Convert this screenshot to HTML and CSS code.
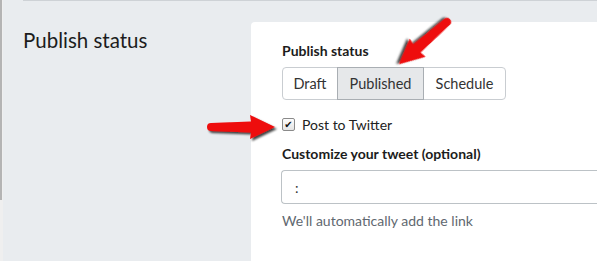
FILE: index.html
```html
<!DOCTYPE html>
<html lang="en">
<head>
    <meta charset="UTF-8">
    <meta name="viewport" content="width=device-width, initial-scale=1.0">
    <title>Publish status</title>
    <link rel="stylesheet" href="styles.css">
</head>
<body>
    <div class="page">
        <div class="topline"></div>
        <div class="section">
            <div class="side">
                <h2>Publish status</h2>
            </div>
            <div class="card">
                <div class="field-label">Publish status</div>
                <div class="btn-group">
                    <button type="button" class="draft">Draft</button>
                    <button type="button" class="published active">Published</button>
                    <button type="button" class="schedule">Schedule</button>
                </div>
                <label class="check">
                    <input type="checkbox" checked>
                    <span>Post to Twitter</span>
                </label>
                <div class="field-label">Customize your tweet (optional)</div>
                <input class="tweet" type="text" value=":">
                <p class="help">We'll automatically add the link</p>
            </div>
        </div>
    </div>

    <svg class="arrows" width="597" height="261" viewBox="0 0 597 261">
        <defs>
            <filter id="shadow" x="-20%" y="-20%" width="140%" height="140%">
                <feDropShadow dx="2" dy="2" stdDeviation="1.2" flood-color="#000" flood-opacity="0.75"/>
            </filter>
        </defs>
        <path d="M0,-4 L40,-5.5 L39,-12 L64,0 L39,12 L40,5.5 L0,4 A4 4 0 0 1 0,-4 Z"
              fill="#ee0a0a" filter="url(#shadow)" transform="translate(211,127)"/>
        <path d="M0,-4 L40,-5.5 L39,-12 L64,0 L39,12 L40,5.5 L0,4 A4 4 0 0 1 0,-4 Z"
              fill="#ee0a0a" filter="url(#shadow)" transform="translate(447,22) rotate(138.7)"/>
    </svg>
</body>
</html>
```

FILE: styles.css
```css
html {
    background: #efefef;
}
body {
    margin: 0;
    font-family: Lato, "Open Sans", sans-serif;
    color: #222;
    background: linear-gradient(to bottom, #b4b4b4 200px, #efefef 200px) 0 0 / 2px 100% no-repeat;
    height: 261px;
    overflow: hidden;
}
.page {
    margin-left: 3px;
    background-color: #e9ecef;
    height: 261px;
}
.topline {
    height: 1px;
    border-top: 1px solid #ced2d6;
    margin-left: 20px;
}
.section {
    display: flex;
    padding-top: 20px;
}
.side {
    width: 228px;
    padding-left: 20px;
    flex-shrink: 0;
}
.side h2 {
    margin: 6px 0 0;
    font-size: 20.5px;
    font-weight: 400;
    color: #1c1c1c;
}
.card {
    flex: 1;
    background: white;
    border-radius: 4px 0 0 0;
    padding: 20px 0 0 31px;
    height: 219px;
}
.field-label {
    font-size: 14px;
    font-weight: 700;
    color: #1c1c1c;
    line-height: 18px;
}
.btn-group {
    display: flex;
    margin-top: 7px;
}
.btn-group button {
    font-family: inherit;
    font-size: 14.5px;
    color: #333;
    background: white;
    border: 1px solid #c9cdd1;
    height: 33px;
    padding: 0;
    margin: 0;
    margin-left: -1px;
}
.btn-group .draft {
    width: 56px;
    margin-left: 0;
    border-radius: 4px 0 0 4px;
}
.btn-group .published {
    width: 87px;
}
.btn-group .schedule {
    width: 83px;
    border-radius: 0 4px 4px 0;
}
.btn-group button.active {
    background: #e6e8ea;
    border-color: #a9aeb3;
    position: relative;
}
.check {
    display: flex;
    align-items: center;
    gap: 7px;
    margin: 16px 0 12px;
    font-size: 14px;
    color: #222;
}
.check input {
    appearance: none;
    margin: 0;
    width: 13px;
    height: 13px;
    border: 1px solid #8a8a8a;
    border-radius: 2px;
    background: linear-gradient(#fdfdfd, #e4e4e4);
    display: flex;
    align-items: center;
    justify-content: center;
}
.check input:checked::before {
    content: "\2714";
    font-family: "DejaVu Sans", sans-serif;
    font-size: 10px;
    line-height: 1;
    color: #111;
}
.tweet {
    display: block;
    box-sizing: border-box;
    width: calc(100% + 2px);
    margin: 7px 0 0 -1px;
    height: 34px;
    padding: 0 13px;
    font-family: inherit;
    font-size: 14px;
    color: #333;
    border: 1px solid #bcc2c6;
    border-right: none;
    border-radius: 4px 0 0 4px;
}
.help {
    margin: 8px 0 0;
    font-size: 14px;
    color: #5f6870;
}
.arrows {
    position: absolute;
    left: 0;
    top: 0;
    pointer-events: none;
}
```
